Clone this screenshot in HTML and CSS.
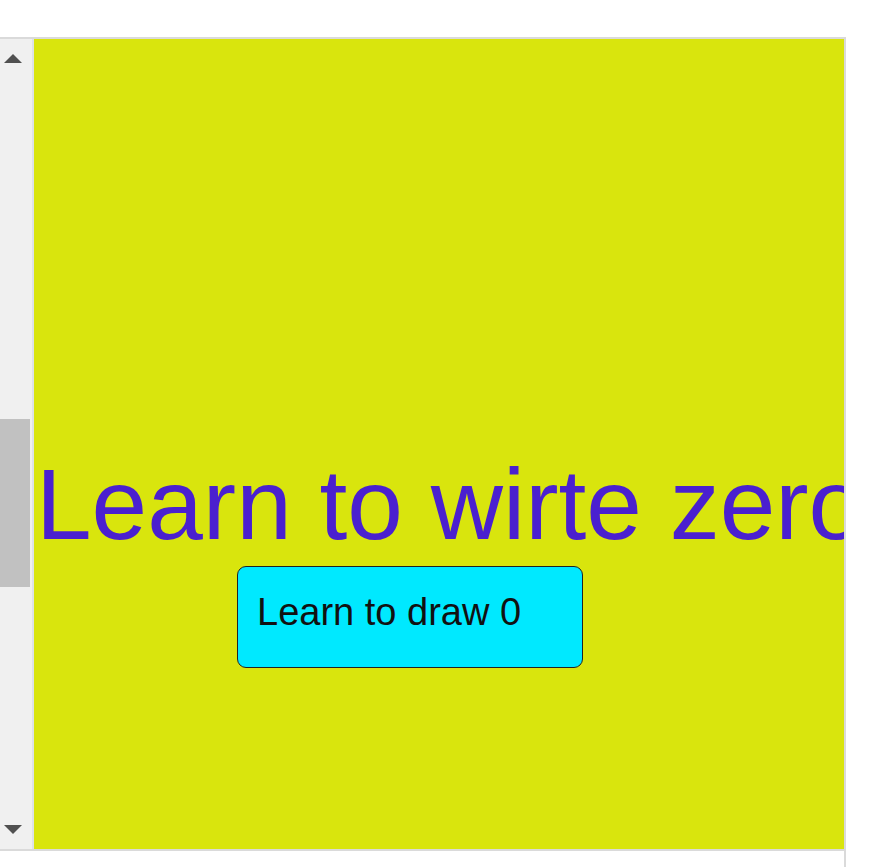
FILE: index.html
```html
<!DOCTYPE html>
<html>
<head>
<meta charset="utf-8">
<link rel="stylesheet" href="styles.css">
</head>
<body>
<div class="frame">
  <div class="scrollbar">
    <div class="arrow-up"></div>
    <div class="thumb"></div>
    <div class="spacer"></div>
    <div class="arrow-down"></div>
  </div>
  <div class="divider"></div>
  <div class="content">
    <h1 class="title">Learn to wirte zero</h1>
    <button class="draw-btn">Learn to draw 0</button>
  </div>
</div>
<div class="below"></div>
</body>
</html>
```

FILE: styles.css
```css
html, body {
  margin: 0;
  padding: 0;
  background: #ffffff;
  font-family: "Liberation Sans", Arial, sans-serif;
}

.frame {
  margin-top: 37px;
  width: 844px;
  height: 810px;
  display: flex;
  border-top: 2px solid #dadada;
  border-right: 2px solid #dadada;
  border-bottom: 2px solid #dadada;
  overflow: hidden;
}

.scrollbar {
  width: 32px;
  flex: 0 0 32px;
  background: #f0f0f0;
  display: flex;
  flex-direction: column;
}

.arrow-up {
  width: 0;
  height: 0;
  margin: 15px 0 0 4px;
  border-left: 9px solid transparent;
  border-right: 9px solid transparent;
  border-bottom: 9px solid #505050;
}

.thumb {
  width: 30px;
  height: 168px;
  margin-top: 356px;
  background: #c1c1c1;
}

.spacer {
  flex: 1;
}

.arrow-down {
  width: 0;
  height: 0;
  margin: 0 0 15px 4px;
  border-left: 9px solid transparent;
  border-right: 9px solid transparent;
  border-top: 9px solid #505050;
}

.divider {
  flex: 0 0 2px;
  background: #dfe3e8;
}

.content {
  flex: 1;
  background: #d9e50d;
  overflow: hidden;
}

.title {
  margin: 408px 0 0 2px;
  font-family: "Liberation Sans", Arial, sans-serif;
  font-weight: normal;
  font-size: 100px;
  line-height: 115px;
  color: #4a20cf;
  white-space: nowrap;
}

.draw-btn {
  box-sizing: border-box;
  width: 346px;
  height: 102px;
  margin: 4px 0 0 203px;
  padding: 23px 19px 0 19px;
  text-align: left;
  font-family: "Liberation Sans", Arial, sans-serif;
  font-size: 38px;
  line-height: 44px;
  color: #111111;
  background: #00e9ff;
  border: 1px solid #222222;
  border-radius: 9px;
  display: flex;
  align-items: flex-start;
}

.below {
  width: 844px;
  height: 40px;
  border-right: 2px solid #dadada;
}
```
